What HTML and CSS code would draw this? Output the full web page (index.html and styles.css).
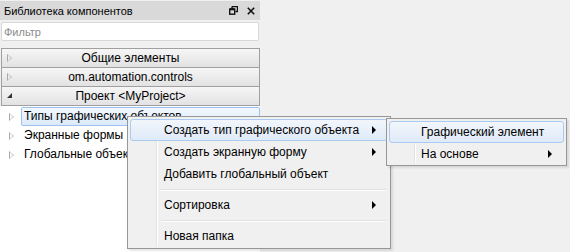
FILE: index.html
```html
<!DOCTYPE html>
<html>
  <head>
    <link rel="stylesheet" href="styles.css">
  </head>
  <body>
    <div class="panel">
      <div class="panel-head">
        <span>Библиотека компонентов</span>
        <span class="head-tools">
          <svg width="9" height="9" viewBox="0 0 9 9">
            <path d="M3 0.5h5.5v5h-2 M3 0.5v2" fill="none" stroke="#111" stroke-width="1.4"/>
            <rect x="0.7" y="3.2" width="5" height="5" fill="none" stroke="#111" stroke-width="1.4"/>
            <path d="M0.7 3.2h5" stroke="#111" stroke-width="2.2"/>
          </svg>
          <svg width="8" height="8" viewBox="0 0 8 8">
            <path d="M0.8 0.8l6.4 6.4M7.2 0.8l-6.4 6.4" stroke="#111" stroke-width="1.6"/>
          </svg>
        </span>
      </div>
      <input class="filter" type="text" placeholder="Фильтр">
      <div class="sections">
        <div class="sec"><i class="exp"></i>Общие элементы</div>
        <div class="sec"><i class="exp"></i>om.automation.controls</div>
        <div class="sec"><i class="exp open"></i>Проект &lt;MyProject&gt;</div>
      </div>
      <div class="tree">
        <div class="row"><i class="exp"></i><span class="label selected">Типы графических объектов</span></div>
        <div class="row"><i class="exp"></i><span class="label">Экранные формы</span></div>
        <div class="row"><i class="exp"></i><span class="label">Глобальные объекты</span></div>
      </div>
    </div>

    <!-- context menu -->
    <div class="menu main-menu">
      <div class="item hot">Создать тип графического объекта<i class="arrow"></i></div>
      <div class="item">Создать экранную форму<i class="arrow"></i></div>
      <div class="item">Добавить глобальный объект</div>
      <div class="sep"></div>
      <div class="item">Сортировка<i class="arrow"></i></div>
      <div class="sep"></div>
      <div class="item">Новая папка</div>
    </div>
    <div class="menu sub-menu">
      <div class="item hot">Графический элемент</div>
      <div class="item">На основе<i class="arrow"></i></div>
    </div>
  </body>
</html>
```

FILE: styles.css
```css
body {
  margin: 0;
  background: #f0f0f0;
  font-family: "Liberation Sans", Arial, sans-serif;
  font-size: 12px;
  color: #000;
  position: relative;
  height: 252px;
  overflow: hidden;
}
.panel {
  width: 260px;
  height: 252px;
  display: flex;
  flex-direction: column;
}
.panel-head {
  margin-top: 1px;
  height: 19px;
  background: #d9d9d9;
  display: flex;
  align-items: center;
  justify-content: space-between;
  padding: 0 5px 0 4px;
  font-size: 11px;
}
.head-tools {
  display: flex;
  gap: 9px;
  align-items: center;
}
.filter {
  margin: 2px 1px 0 1px;
  height: 19px;
  box-sizing: border-box;
  border: 1px solid #d8d8d8;
  border-radius: 2px;
  background: #fff;
  padding: 0 2px;
  font: inherit;
  font-size: 11px;
}
.filter::placeholder {
  color: #8c8c8c;
}
.sections {
  margin: 7px 0 0 1px;
  border: 1px solid #a0a0a0;
  border-bottom: 0;
}
.sec {
  position: relative;
  height: 18px;
  line-height: 18px;
  text-align: center;
  border-bottom: 1px solid #a0a0a0;
  background: linear-gradient(#f6f6f6, #e2e2e2);
}
.sec .exp {
  position: absolute;
  left: 5px;
  top: 5px;
}
.exp {
  display: inline-block;
  width: 0;
  height: 0;
  border-left: 5px solid #a8a8a8;
  border-top: 4.5px solid transparent;
  border-bottom: 4.5px solid transparent;
  position: relative;
}
.exp::after {
  content: "";
  position: absolute;
  left: -4px;
  top: -3px;
  border-left: 3px solid #fff;
  border-top: 3px solid transparent;
  border-bottom: 3px solid transparent;
}
.sec .exp::after {
  border-left-color: #ececec;
}
.exp.open {
  border: 0;
  width: 0;
  height: 0;
  border-right: 5px solid #333;
  border-top: 5px solid transparent;
  top: 6px;
}
.exp.open::after {
  display: none;
}
.tree {
  flex: 1;
  background: #fff;
  padding-top: 1px;
}
.row {
  height: 19px;
  display: flex;
  align-items: center;
}
.row .exp {
  margin: 0 7px 0 9px;
}
.label {
  padding: 0 2px;
  height: 17px;
  line-height: 17px;
  border: 1px solid transparent;
}
.label.selected {
  flex: 1;
  border-color: #9cc1ee;
  border-radius: 2px;
  background: linear-gradient(#f3f8fe, #dbe9fa);
}

.menu {
  position: absolute;
  background: #f0f0f0;
  border: 1px solid #979797;
  padding: 2px;
  box-sizing: border-box;
  box-shadow: 2px 2px 2px rgba(0, 0, 0, 0.1);
}
.menu::before {
  content: "";
  position: absolute;
  top: 2px;
  bottom: 2px;
  border-left: 1px solid #e2e3e3;
  border-right: 1px solid #fff;
}
.main-menu {
  left: 127px;
  top: 116px;
  width: 264px;
  height: 133px;
}
.main-menu::before {
  left: 28px;
}
.sub-menu {
  left: 386px;
  top: 118px;
  width: 181px;
  height: 48px;
}
.sub-menu::before {
  left: 27px;
}
.item {
  position: relative;
  height: 20px;
  line-height: 20px;
  border: 1px solid transparent;
  border-radius: 3px;
  padding-left: 33px;
}
.sub-menu .item {
  padding-left: 31px;
}
.item.hot {
  border-color: #a9cbf1;
  background: linear-gradient(#f2f6fc, #dfeaf8);
}
.arrow {
  position: absolute;
  right: 11px;
  top: 6px;
  border-left: 4px solid #000;
  border-top: 4px solid transparent;
  border-bottom: 4px solid transparent;
}
.sep {
  height: 9px;
  margin-left: 29px;
  position: relative;
}
.sep::after {
  content: "";
  position: absolute;
  left: 2px;
  right: 2px;
  top: 4px;
  border-top: 1px solid #e0e0e0;
  border-bottom: 1px solid #fff;
}
```
